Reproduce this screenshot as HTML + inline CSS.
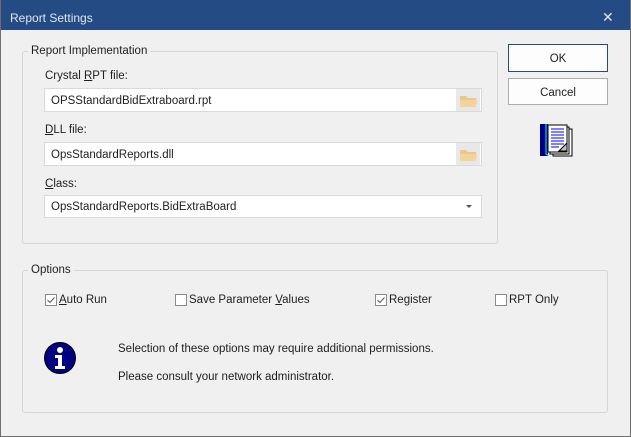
<!DOCTYPE html>
<html><head><meta charset="utf-8"><style>
*{margin:0;padding:0;box-sizing:border-box}
body{width:631px;height:437px;background:#f0f0f0;font-family:"Liberation Sans",sans-serif;font-size:11.5px;color:#1e1e1e;position:relative;overflow:hidden}
.a{position:absolute}
.win{left:0;top:0;width:631px;height:437px;border:1px solid #6f6f6f;border-top:none}
.title{left:0;top:0;width:631px;height:30px;background:#244b84;color:#dfe6f0;font-size:12px}
.grp{border:1px solid #d5d5d5;border-radius:3px}
.lg{background:#f0f0f0;padding:0 3px}
.tb{background:#fff;border:1px solid #d9d9d9;height:24px;padding:6px 0 0 6px}
.btn{background:#fdfdfd;border:1px solid #adadad;text-align:center;padding-top:8px}
.cb{width:11px;height:11px;border:1px solid #8a8a8a;background:#fff}
u{text-decoration:underline}
</style></head><body>
<div class="a title"><span class="a" style="left:10px;top:11px">Report Settings</span><span class="a" style="left:602px;top:9px;font-size:14px">✕</span></div>
<div class="a win"></div>

<div class="a grp" style="left:22px;top:51px;width:476px;height:193px"></div>
<span class="a lg" style="left:28px;top:45px">Report Implementation</span>
<span class="a" style="left:45px;top:70px">Crystal <u>R</u>PT file:</span>
<div class="a tb" style="left:44px;top:88px;width:438px">OPSStandardBidExtraboard.rpt</div>
<span class="a" style="left:45px;top:124px"><u>D</u>LL file:</span>
<div class="a tb" style="left:44px;top:142px;width:438px">OpsStandardReports.dll</div>
<span class="a" style="left:45px;top:178px"><u>C</u>lass:</span>
<div class="a tb" style="left:44px;top:195px;width:438px;height:23px;padding-top:5px">OpsStandardReports.BidExtraBoard</div>
<div class="a" style="left:466px;top:205px;width:0;height:0;border-left:3px solid transparent;border-right:3px solid transparent;border-top:3px solid #555"></div>
<svg class="a" style="left:456px;top:89px" width="24" height="22"><rect width="24" height="22" fill="#e8e8e8"/><path d="M4 7h6l2 2h8v9H4z" fill="#e8c88c"/><path d="M4 11h17l-1 7H4z" fill="#f2d49a"/></svg>
<svg class="a" style="left:456px;top:143px" width="24" height="22"><rect width="24" height="22" fill="#e8e8e8"/><path d="M4 7h6l2 2h8v9H4z" fill="#e8c88c"/><path d="M4 11h17l-1 7H4z" fill="#f2d49a"/></svg>

<div class="a btn" style="left:508px;top:44px;width:100px;height:28px;border:1px solid #244b84">OK</div>
<div class="a btn" style="left:508px;top:78px;width:100px;height:27px">Cancel</div>
<svg class="a" style="left:540px;top:124px" width="34" height="34"><rect x="0" y="0" width="8" height="32" fill="#000080"/><path d="M6 0v30l3 2" stroke="#0ff" fill="none"/><rect x="13" y="5" width="19" height="27" fill="#fff" stroke="#000"/><rect x="10" y="3" width="19" height="27" fill="#fff" stroke="#000"/><rect x="8" y="1" width="19" height="27" fill="#fff" stroke="#000"/><g stroke="#00f"><path d="M11 5h13M11 8h13M11 11h13M11 14h13M11 17h13M11 20h13M11 23h8"/></g><path d="M19 27l8-8v8z" fill="#c0c0c0" stroke="#000"/></svg>

<div class="a grp" style="left:22px;top:270px;width:586px;height:143px"></div>
<span class="a lg" style="left:28px;top:264px">Options</span>
<svg class="a" style="left:45px;top:294px" width="12" height="12"><rect x=".5" y=".5" width="11" height="11" fill="#fff" stroke="#8a8a8a"/><path d="M2.5 6l2.5 2.5 4.5-5" stroke="#555" fill="none"/></svg>
<span class="a" style="left:59px;top:294px"><u>A</u>uto Run</span>
<div class="a cb" style="left:175px;top:294px;width:12px;height:12px"></div>
<span class="a" style="left:189px;top:294px">Save Parameter <u>V</u>alues</span>
<svg class="a" style="left:375px;top:294px" width="12" height="12"><rect x=".5" y=".5" width="11" height="11" fill="#fff" stroke="#8a8a8a"/><path d="M2.5 6l2.5 2.5 4.5-5" stroke="#555" fill="none"/></svg>
<span class="a" style="left:389px;top:294px">Re<u>g</u>ister</span>
<div class="a cb" style="left:495px;top:294px;width:12px;height:12px"></div>
<span class="a" style="left:509px;top:294px">RPT Only</span>
<svg class="a" style="left:43px;top:341px" width="34" height="34"><circle cx="17" cy="17" r="15.5" fill="#000080" stroke="#000"/><circle cx="17" cy="9" r="3" fill="#fff"/><path d="M12 14h7v11h3v3H12v-3h3v-8h-3z" fill="#fff"/></svg>
<span class="a" style="left:118px;top:343px">Selection of these options may require additional permissions.</span>
<span class="a" style="left:118px;top:371px">Please consult your network administrator.</span>
</body></html>
